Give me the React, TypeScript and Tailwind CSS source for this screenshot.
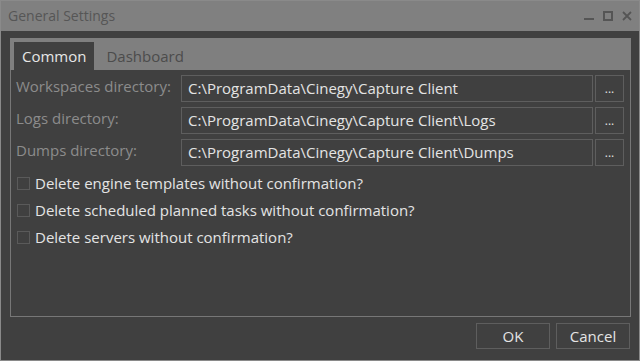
import React from 'react';

const paths = [
  { label: 'Workspaces directory:', value: 'C:\\ProgramData\\Cinegy\\Capture Client' },
  { label: 'Logs directory:', value: 'C:\\ProgramData\\Cinegy\\Capture Client\\Logs' },
  { label: 'Dumps directory:', value: 'C:\\ProgramData\\Cinegy\\Capture Client\\Dumps' },
];

const options = [
  'Delete engine templates without confirmation?',
  'Delete scheduled planned tasks without confirmation?',
  'Delete servers without confirmation?',
];

export default function App() {
  return (
    <div
      className="w-[640px] h-[361px] bg-[#404040] border border-[#8a8a8a] flex flex-col overflow-hidden"
      style={{ fontFamily: '"Open Sans", "Noto Sans", sans-serif' }}
    >
      {/* Title bar */}
      <div className="h-[30px] bg-[#808080] flex items-center justify-between pl-[7px] pr-[7px] shrink-0">
        <span className="text-[14px] text-[#565656] leading-none">General Settings</span>
        <div className="flex items-center gap-[9px] text-[#555]">
          <svg width="10" height="10" viewBox="0 0 10 10">
            <rect x="0" y="7" width="10" height="2" fill="#555" />
          </svg>
          <svg width="10" height="10" viewBox="0 0 10 10">
            <rect x="1" y="1" width="8" height="8" fill="none" stroke="#555" strokeWidth="2" />
          </svg>
          <svg width="10" height="10" viewBox="0 0 10 10">
            <path d="M1 1L9 9M9 1L1 9" stroke="#555" strokeWidth="1.8" />
          </svg>
        </div>
      </div>

      {/* Body */}
      <div className="flex-1 flex flex-col pl-[9px] pr-[8px] pt-[7px]">
        {/* Tabs */}
        <div className="h-[32px] bg-[#7f7f7f] flex items-end pl-[4px] shrink-0">
          <div className="h-[28px] px-[8px] bg-[#404040] text-[#e6e6e6] text-[15px] flex items-center">
            Common
          </div>
          <div className="h-[28px] px-[12px] text-[#4c4c4c] text-[15px] flex items-center">
            Dashboard
          </div>
        </div>

        {/* Panel */}
        <div className="h-[247px] border border-t-0 border-[#777] flex flex-col pl-[5px] pr-[5px] pt-[5px]">
          <div className="flex flex-col gap-[6px]">
            {paths.map((p) => (
              <div key={p.label} className="flex items-start h-[26px]">
                <span className="w-[165px] text-[15px] text-[#8c8c8c] leading-[18px] pt-[2px] whitespace-nowrap">
                  {p.label}
                </span>
                <div className="w-[412px] h-[27px] border border-[#5e5e5e] flex items-center pl-[6px] text-[15px] text-[#e4e4e4] whitespace-nowrap">
                  {p.value}
                </div>
                <button className="ml-[2px] w-[29px] h-[27px] border border-[#5e5e5e] text-[#e0e0e0] text-[12px] leading-none flex items-end justify-center pb-[6px]">
                  ...
                </button>
              </div>
            ))}
          </div>

          <div className="flex flex-col mt-[5px]">
            {options.map((o) => (
              <label key={o} className="flex items-center h-[27px] gap-[5px]">
                <span className="ml-[1px] w-[13px] h-[13px] border border-[#5a5a5a] shrink-0" />
                <span className="text-[15px] text-[#e4e4e4]">{o}</span>
              </label>
            ))}
          </div>
        </div>

        {/* Footer buttons */}
        <div className="flex justify-end gap-[6px] mt-[6px] pr-[1px]">
          <button className="w-[74px] h-[26px] border border-[#5e5e5e] text-[#e4e4e4] text-[15px] flex items-center justify-center">
            OK
          </button>
          <button className="w-[74px] h-[26px] border border-[#5e5e5e] text-[#e4e4e4] text-[15px] flex items-center justify-center">
            Cancel
          </button>
        </div>
      </div>
    </div>
  );
}
